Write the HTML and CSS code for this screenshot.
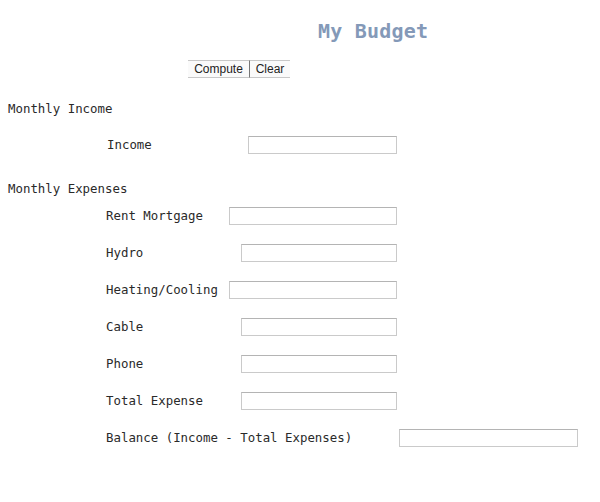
FILE: index.html
```html
<!DOCTYPE html>
<html>
<head>
<meta charset="utf-8">
<title>My Budget</title>
<link rel="stylesheet" href="styles.css">
</head>
<body>
<h1 class="title">My Budget</h1>
<div class="actions">
  <button class="btn btn-compute" type="button">Compute</button><button class="btn btn-clear" type="button">Clear</button>
</div>
<form class="budget">
  <h2 class="section">Monthly Income</h2>
  <div class="row row-income">
    <label class="label label-income">Income</label>
    <input class="field w149" type="text">
  </div>
  <h2 class="section section-exp">Monthly Expenses</h2>
  <div class="row">
    <label class="label">Rent Mortgage</label>
    <input class="field w168" type="text">
  </div>
  <div class="row">
    <label class="label">Hydro</label>
    <input class="field w156" type="text">
  </div>
  <div class="row">
    <label class="label">Heating/Cooling</label>
    <input class="field w168" type="text">
  </div>
  <div class="row">
    <label class="label">Cable</label>
    <input class="field w156" type="text">
  </div>
  <div class="row">
    <label class="label">Phone</label>
    <input class="field w156" type="text">
  </div>
  <div class="row">
    <label class="label">Total Expense</label>
    <input class="field w156" type="text">
  </div>
  <div class="row row-balance">
    <label class="label">Balance (Income - Total Expenses)</label>
    <input class="field w179" type="text">
  </div>
</form>
</body>
</html>
```
FILE: styles.css
```css
html, body {
  margin: 0;
  padding: 0;
  background: #ffffff;
}
body {
  padding: 8px;
  font-family: "DejaVu Sans Mono", "Liberation Mono", monospace;
  font-size: 12.4px;
  color: #2a2a2a;
}
.title {
  margin: 11px 0 0 310px;
  font-size: 20px;
  line-height: 24px;
  font-weight: bold;
  color: #8499b8;
  letter-spacing: 0.2px;
}
.actions {
  margin: 17px 0 0 180px;
  display: flex;
  height: 18px;
}
.btn {
  font-family: "Liberation Sans", Arial, sans-serif;
  font-size: 12px;
  color: #222;
  background: #fafafa;
  border: none;
  border-top: 1px solid #c8c8c8;
  border-bottom: 1px solid #c8c8c8;
  padding: 0;
  height: 18px;
  line-height: 16px;
}
.btn-compute {
  width: 62px;
  border-right: 1px solid #777;
}
.btn-clear {
  width: 40px;
}
.budget {
  margin: 0;
}
.section {
  margin: 23px 0 0 0;
  font-size: 12.4px;
  font-weight: normal;
  line-height: 16px;
}
.section-exp {
  margin-top: 18px;
}
.row {
  display: flex;
  align-items: center;
  height: 37px;
  width: 389px;
  padding-left: 98px;
  box-sizing: border-box;
}
.row-income {
  margin-top: 9px;
  padding-left: 99px;
}
.label {
  white-space: nowrap;
}
.field {
  margin-left: auto;
  height: 18px;
  box-sizing: border-box;
  border: 1px solid #cacaca;
  border-top-color: #b4b4b4;
  background: #fff;
  padding: 0 2px;
}
.row-balance {
  width: 570px;
}
.w149 { width: 149px; }
.w156 { width: 156px; }
.w168 { width: 168px; }
.w179 { width: 179px; }
```
